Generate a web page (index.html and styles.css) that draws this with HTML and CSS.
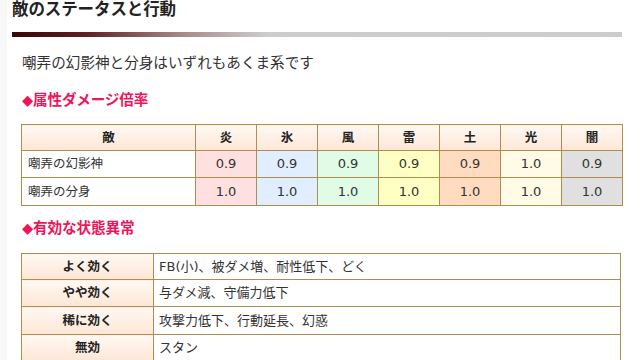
FILE: index.html
```html
<!DOCTYPE html>
<html lang="ja">
<head>
<meta charset="utf-8">
<title>敵のステータスと行動</title>
<link rel="stylesheet" href="styles.css">
</head>
<body>
<main class="content">
  <h2 class="title">敵のステータスと行動</h2>
  <div class="title-bar"></div>
  <p class="lead">嘲弄の幻影神と分身はいずれもあくま系です</p>

  <h3 class="sub">◆属性ダメージ倍率</h3>
  <table class="tbl elem">
    <colgroup>
      <col class="c-name">
      <col class="c-el"><col class="c-el"><col class="c-el"><col class="c-el"><col class="c-el"><col class="c-el"><col class="c-el">
    </colgroup>
    <tr class="r-head">
      <th>敵</th><th>炎</th><th>氷</th><th>風</th><th>雷</th><th>土</th><th>光</th><th>闇</th>
    </tr>
    <tr class="r1">
      <td class="name">嘲弄の幻影神</td>
      <td class="fire">0.9</td><td class="ice">0.9</td><td class="wind">0.9</td><td class="thunder">0.9</td><td class="earth">0.9</td><td class="light">1.0</td><td class="dark">0.9</td>
    </tr>
    <tr class="r2">
      <td class="name">嘲弄の分身</td>
      <td class="fire">1.0</td><td class="ice">1.0</td><td class="wind">1.0</td><td class="thunder">1.0</td><td class="earth">1.0</td><td class="light">1.0</td><td class="dark">1.0</td>
    </tr>
  </table>

  <h3 class="sub sub2">◆有効な状態異常</h3>
  <table class="tbl status">
    <colgroup>
      <col class="c-key">
      <col>
    </colgroup>
    <tr class="s1"><th>よく効く</th><td>FB(小)、被ダメ増、耐性低下、どく</td></tr>
    <tr class="s2"><th>やや効く</th><td>与ダメ減、守備力低下</td></tr>
    <tr class="s3"><th>稀に効く</th><td>攻撃力低下、行動延長、幻惑</td></tr>
    <tr class="s4"><th>無効</th><td>スタン</td></tr>
  </table>
</main>
</body>
</html>
```

FILE: styles.css
```css
html, body {
  margin: 0;
  padding: 0;
}
body {
  background: #f8f8f8;
  font-family: "DejaVu Sans", "Noto Sans CJK JP", sans-serif;
  color: #333;
  overflow: hidden;
}
.content {
  background: #fff;
  margin-left: 7px;
  padding-left: 5px;
  height: 360px;
}
.title {
  margin: 0;
  font-size: 16.5px;
  line-height: 20px;
  font-weight: bold;
  color: #222;
  letter-spacing: -0.1px;
}
.title-bar {
  margin-top: 12px;
  width: 610px;
  height: 5px;
  background: linear-gradient(to right, #3a0505 0%, #5c2020 12%, #a88a8a 28%, #cdcdcd 42%, #cccccc 100%);
}
.lead {
  margin: 16px 0 0 10px;
  font-size: 14.6px;
  line-height: 20px;
  color: #333;
  letter-spacing: 0;
}
.sub {
  margin: 17px 0 0 10px;
  font-size: 14.6px;
  line-height: 20px;
  font-weight: bold;
  color: #f0145a;
  letter-spacing: -0.1px;
}
.sub2 {
  margin-top: 12px;
}
.tbl {
  margin-left: 9px;
  width: 600px;
  border-collapse: collapse;
  table-layout: fixed;
  font-size: 13px;
  color: #333;
}
.tbl th, .tbl td {
  border: 1px solid #ad8e4e;
  padding: 0 6px;
  line-height: 16px;
}
.tbl th {
  font-size: 12.5px;
  font-weight: bold;
  color: #222;
  text-align: center;
  background: linear-gradient(to bottom, #fff8f2 0%, #fde7d6 100%);
}
.elem {
  margin-top: 14px;
}
.elem .c-name { width: 174px; }
.elem .c-el { width: 61px; }
.elem td { text-align: center; }
.elem td.name { text-align: left; background: #fff; font-size: 12.5px; }
.elem .r-head { height: 26px; }
.elem .r1 { height: 27px; }
.elem .r2 { height: 28px; }
.fire { background: #ffe0e0; }
.ice { background: #e0eeff; }
.wind { background: #e0fbe6; }
.thunder { background: #ffffc4; }
.earth { background: #ffdcc0; }
.light { background: #fffbe6; }
.dark { background: #e0e0e0; }
.status {
  margin-top: 15px;
}
.status .c-key { width: 132px; }
.status td { text-align: left; padding-left: 5px; background: #fff; }
.status .s1 { height: 26px; }
.status .s2 { height: 27px; }
.status .s3 { height: 28px; }
.status .s4 { height: 26px; }
```
